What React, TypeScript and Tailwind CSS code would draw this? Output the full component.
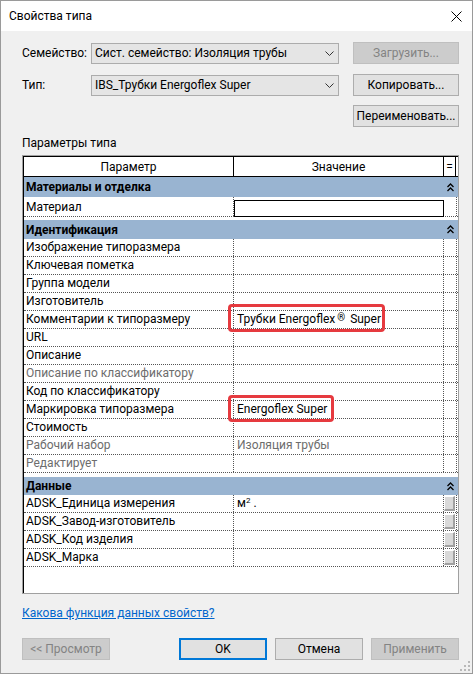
import React from 'react';

const FONT = { fontFamily: 'Roboto, "Noto Sans", sans-serif' };

type Row = { name: string; value?: React.ReactNode; dim?: boolean; valueDim?: boolean; button?: boolean };

const identRows: Row[] = [
  { name: 'Изображение типоразмера' },
  { name: 'Ключевая пометка' },
  { name: 'Группа модели' },
  { name: 'Изготовитель' },
  {
    name: 'Комментарии к типоразмеру',
    value: (
      <>
        Трубки Energoflex<span className="relative -top-[2px] mx-[2px] text-[10px]">®</span> Super
      </>
    ),
  },
  { name: 'URL' },
  { name: 'Описание' },
  { name: 'Описание по классификатору', dim: true },
  { name: 'Код по классификатору' },
  { name: 'Маркировка типоразмера', value: 'Energoflex Super' },
  { name: 'Стоимость' },
  { name: 'Рабочий набор', dim: true, value: 'Изоляция трубы', valueDim: true },
  { name: 'Редактирует', dim: true },
];

const dataRows: Row[] = [
  {
    name: 'ADSK_Единица измерения',
    value: (
      <>
        м<sup className="text-[8px]">2</sup> .
      </>
    ),
    button: true,
  },
  { name: 'ADSK_Завод-изготовитель', button: true },
  { name: 'ADSK_Код изделия', button: true },
  { name: 'ADSK_Марка', button: true },
];

function Chevron() {
  return (
    <svg width="9" height="5" viewBox="0 0 9 5" className="shrink-0">
      <path d="M0.5 0.5 L4.5 4.5 L8.5 0.5" fill="none" stroke="#333" strokeWidth="1" />
    </svg>
  );
}

function Collapse() {
  return (
    <svg width="7" height="9" viewBox="0 0 7 9">
      <path d="M0.5 4 L3.5 1 L6.5 4 M0.5 8 L3.5 5 L6.5 8" fill="none" stroke="#000" strokeWidth="1.3" />
    </svg>
  );
}

function Combo({ text }: { text: string }) {
  return (
    <div className="w-[248px] h-[21px] bg-[#e5e5e5] border border-[#acacac] flex items-center justify-between pl-[3px] pr-[4px]">
      <span>{text}</span>
      <Chevron />
    </div>
  );
}

function Btn({ children, disabled, primary, className = '' }: { children: React.ReactNode; disabled?: boolean; primary?: boolean; className?: string }) {
  return (
    <div
      className={
        'h-[22px] flex items-center justify-center ' +
        (disabled
          ? 'bg-[#cccccc] border border-[#bfbfbf] text-[#838383] '
          : primary
          ? 'bg-[#e1e1e1] border-2 border-[#0078d7] text-black '
          : 'bg-[#e1e1e1] border border-[#adadad] text-black ') +
        className
      }
    >
      {children}
    </div>
  );
}

function GroupRow({ title, h }: { title: string; h: string }) {
  return (
    <div className={'flex items-center bg-[#99b4d1] font-bold ' + h}>
      <div className="w-[420px] pl-[2px]">{title}</div>
      <div className="w-[13px] flex justify-center">
        <Collapse />
      </div>
    </div>
  );
}

function DataRow({ row }: { row: Row }) {
  return (
    <div className="flex h-[18px] border-b border-dotted border-[#555]">
      <div className={'w-[210px] pl-[2px] border-r border-dotted border-[#555] leading-[17px] ' + (row.dim ? 'text-[#6d6d6d]' : '')}>
        {row.name}
      </div>
      <div className={'w-[210px] pl-[3px] border-r border-dotted border-[#555] leading-[17px] whitespace-nowrap ' + (row.valueDim ? 'text-[#6d6d6d]' : '')}>
        {row.value}
      </div>
      <div className="w-[13px] border-r border-dotted border-[#555] flex items-start">
        {row.button && (
          <div className="mt-[1px] w-[11px] h-[15px] bg-[#d9d9d9] border-t border-l border-white border-r-2 border-b-2 border-r-[#a0a0a0] border-b-[#a0a0a0]" />
        )}
      </div>
    </div>
  );
}

export default function App() {
  return (
    <div className="w-[473px] h-[674px] bg-[#f0f0f0] border border-[#9a9a9a] text-[12px] text-black relative overflow-hidden" style={FONT}>
      {/* Title bar */}
      <div className="h-[30px] bg-white flex items-center justify-between pl-[8px] pr-[10px]">
        <span className="text-[12px]">Свойства типа</span>
        <svg width="11" height="11" viewBox="0 0 11 11">
          <path d="M0.5 0.5 L10.5 10.5 M10.5 0.5 L0.5 10.5" stroke="#000" strokeWidth="1" />
        </svg>
      </div>

      <div className="pl-[21px] pr-[13px]">
        {/* Family */}
        <div className="mt-[11px] h-[22px] flex items-center">
          <div className="w-[69px]">Семейство:</div>
          <Combo text="Сист. семейство: Изоляция трубы" />
          <Btn disabled className="ml-auto w-[106px]">Загрузить...</Btn>
        </div>
        {/* Type */}
        <div className="mt-[10px] h-[22px] flex items-center">
          <div className="w-[69px]">Тип:</div>
          <Combo text="IBS_Трубки Energoflex Super" />
          <Btn className="ml-auto w-[106px]">Копировать...</Btn>
        </div>
        <div className="mt-[9px] flex justify-end">
          <Btn className="w-[106px]">Переименовать...</Btn>
        </div>

        <div className="mt-[8px] h-[16px] leading-[16px]">Параметры типа</div>

        {/* Property grid */}
        <div className="mt-[4px] w-[437px] h-[439px] border border-[#a0a0a0] bg-white relative">
          <div className="h-full border-l border-black">
            <div className="flex h-[21px] border-t border-b border-black">
              <div className="w-[210px] border-r border-black flex items-center justify-center">Параметр</div>
              <div className="w-[210px] border-r border-black flex items-center justify-center">Значение</div>
              <div className="w-[12px] border-r border-black flex items-center justify-center leading-none">=</div>
            </div>

            <GroupRow title="Материалы и отделка" h="h-[20px]" />
            <div className="flex h-[20px] border-b border-dotted border-[#555]">
              <div className="w-[210px] pl-[2px] border-r border-dotted border-[#555] leading-[20px]">Материал</div>
              <div className="w-[210px] pt-[3px]">
                <div className="h-[17px] w-[210px] border border-black bg-white" />
              </div>
              <div className="w-[13px] border-r border-dotted border-[#555]" />
            </div>

            <div className="h-[3px]" />
            <GroupRow title="Идентификация" h="h-[19px]" />
            {identRows.map((r) => (
              <DataRow key={r.name} row={r} />
            ))}

            <div className="h-[4px]" />
            <GroupRow title="Данные" h="h-[18px]" />
            {dataRows.map((r) => (
              <DataRow key={r.name} row={r} />
            ))}
          </div>

          {/* annotation boxes */}
          <div className="absolute left-[205px] top-[148px] w-[157px] h-[28px] border-[3px] border-[#e63a3f] rounded-[4px]" />
          <div className="absolute left-[205px] top-[239px] w-[106px] h-[27px] border-[3px] border-[#e63a3f] rounded-[4px]" />
        </div>

        <div className="mt-[11px] h-[16px] leading-[16px]">
          <span className="text-[#0066cc] underline">Какова функция данных свойств?</span>
        </div>

        <div className="mt-[17px] flex">
          <Btn disabled className="w-[88px]">&lt;&lt; Просмотр</Btn>
          <div className="ml-auto flex gap-[8px]">
            <Btn primary className="w-[88px]">OK</Btn>
            <Btn className="w-[88px]">Отмена</Btn>
            <Btn disabled className="w-[88px]">Применить</Btn>
          </div>
        </div>
      </div>

      {/* resize grip */}
      <svg width="10" height="10" viewBox="0 0 10 10" className="absolute right-[2px] bottom-[2px]">
        <rect x="8" y="0" width="2" height="2" fill="#b8b8b8" />
        <rect x="4" y="4" width="2" height="2" fill="#b8b8b8" />
        <rect x="8" y="4" width="2" height="2" fill="#b8b8b8" />
        <rect x="0" y="8" width="2" height="2" fill="#b8b8b8" />
        <rect x="4" y="8" width="2" height="2" fill="#b8b8b8" />
        <rect x="8" y="8" width="2" height="2" fill="#b8b8b8" />
      </svg>
    </div>
  );
}
